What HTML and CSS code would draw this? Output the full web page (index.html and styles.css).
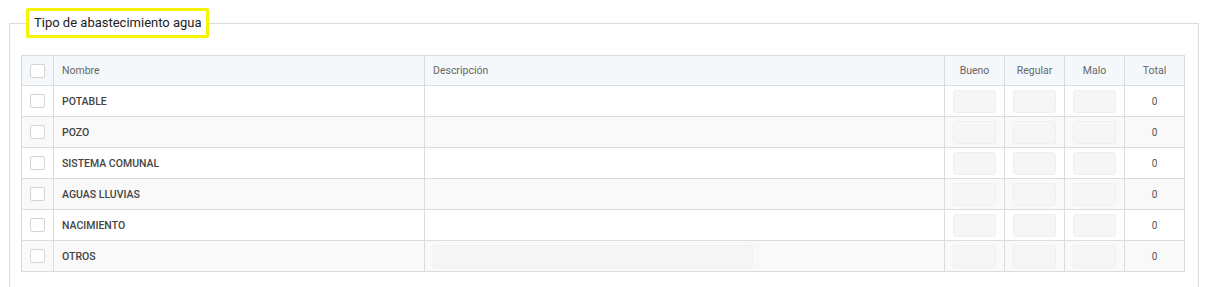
FILE: index.html
```html
<!DOCTYPE html>
<html lang="es">
<head>
  <meta charset="UTF-8" />
  <title>Tipo de abastecimiento agua</title>
  <link rel="stylesheet" href="styles.css">
</head>
<body>
  <fieldset class="group">
    <legend class="group-title">Tipo de abastecimiento agua</legend>

    <table class="grid">
      <colgroup>
        <col class="col-check">
        <col class="col-name">
        <col class="col-desc">
        <col class="col-num">
        <col class="col-num">
        <col class="col-num">
        <col class="col-num">
      </colgroup>
      <thead>
        <tr>
          <th class="cell-check"><span class="check"></span></th>
          <th>Nombre</th>
          <th>Descripción</th>
          <th class="center">Bueno</th>
          <th class="center">Regular</th>
          <th class="center">Malo</th>
          <th class="center">Total</th>
        </tr>
      </thead>
      <tbody>
        <tr>
          <td class="cell-check"><span class="check"></span></td>
          <td class="name">POTABLE</td>
          <td></td>
          <td class="center"><input class="num" type="text" disabled></td>
          <td class="center"><input class="num" type="text" disabled></td>
          <td class="center"><input class="num" type="text" disabled></td>
          <td class="center total">0</td>
        </tr>
        <tr>
          <td class="cell-check"><span class="check"></span></td>
          <td class="name">POZO</td>
          <td></td>
          <td class="center"><input class="num" type="text" disabled></td>
          <td class="center"><input class="num" type="text" disabled></td>
          <td class="center"><input class="num" type="text" disabled></td>
          <td class="center total">0</td>
        </tr>
        <tr>
          <td class="cell-check"><span class="check"></span></td>
          <td class="name">SISTEMA COMUNAL</td>
          <td></td>
          <td class="center"><input class="num" type="text" disabled></td>
          <td class="center"><input class="num" type="text" disabled></td>
          <td class="center"><input class="num" type="text" disabled></td>
          <td class="center total">0</td>
        </tr>
        <tr>
          <td class="cell-check"><span class="check"></span></td>
          <td class="name">AGUAS LLUVIAS</td>
          <td></td>
          <td class="center"><input class="num" type="text" disabled></td>
          <td class="center"><input class="num" type="text" disabled></td>
          <td class="center"><input class="num" type="text" disabled></td>
          <td class="center total">0</td>
        </tr>
        <tr>
          <td class="cell-check"><span class="check"></span></td>
          <td class="name">NACIMIENTO</td>
          <td></td>
          <td class="center"><input class="num" type="text" disabled></td>
          <td class="center"><input class="num" type="text" disabled></td>
          <td class="center"><input class="num" type="text" disabled></td>
          <td class="center total">0</td>
        </tr>
        <tr>
          <td class="cell-check"><span class="check"></span></td>
          <td class="name">OTROS</td>
          <td><input class="desc" type="text" disabled></td>
          <td class="center"><input class="num" type="text" disabled></td>
          <td class="center"><input class="num" type="text" disabled></td>
          <td class="center"><input class="num" type="text" disabled></td>
          <td class="center total">0</td>
        </tr>
      </tbody>
    </table>
  </fieldset>
</body>
</html>
```

FILE: styles.css
```css
body {
  margin: 0;
  font-family: Roboto, "Liberation Sans", sans-serif;
  background: #fff;
  color: #333;
}

.group {
  margin: 8px 0 0 9px;
  width: 1190px;
  box-sizing: border-box;
  border: 1px solid #dcdcdc;
  padding: 1px 14px 20px 11px;
  min-width: 0;
}

.group-title {
  margin-left: 5px;
  padding: 0 4px 0 5px;
  border: 3px solid #f5f500;
  border-radius: 2px;
  font-size: 13px;
  line-height: 24px;
  color: #222;
}

.grid {
  margin-top: 16px;
  border-collapse: collapse;
  table-layout: fixed;
  width: 1163px;
  font-size: 11px;
}

.col-check { width: 32px; }
.col-name { width: 371px; }
.col-desc { width: 520px; }
.col-num { width: 60px; }

.grid th,
.grid td {
  border: 1px solid #dcdcdc;
  padding: 0 0 0 8px;
  text-align: left;
  vertical-align: middle;
}

.grid th {
  height: 29px;
  background: #f5f8fb;
  font-weight: normal;
  color: #666;
  font-size: 10.5px;
}

.grid td {
  height: 30px;
}

.grid tbody tr:nth-child(even) td {
  background: #f9f9f9;
}

.grid .center {
  text-align: center;
  padding: 0;
}

.grid .cell-check {
  padding: 0;
  text-align: center;
}

.check {
  display: inline-block;
  width: 13px;
  height: 12px;
  border: 1px solid #d4d4d4;
  border-radius: 2px;
  background: #fff;
  vertical-align: middle;
}

.name {
  font-weight: 500;
  font-size: 10.5px;
  color: #444;
}

.total {
  color: #555;
  font-size: 10px;
}

.num,
.desc {
  display: block;
  box-sizing: border-box;
  height: 23px;
  border: 1px solid #efefef;
  border-radius: 3px;
  background: #f6f6f6;
  margin: 0 auto;
  padding: 0;
}

.num {
  width: 43px;
}

.desc {
  width: 320px;
  margin: 0;
}
```
